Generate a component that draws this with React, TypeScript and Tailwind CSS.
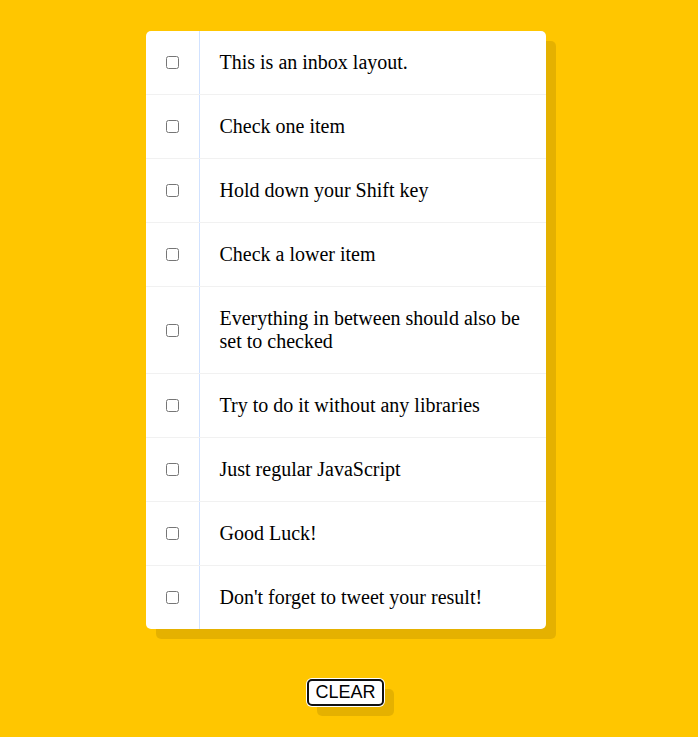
const items = [
  'This is an inbox layout.',
  'Check one item',
  'Hold down your Shift key',
  'Check a lower item',
  'Everything in between should also be set to checked',
  'Try to do it without any libraries',
  'Just regular JavaScript',
  'Good Luck!',
  "Don't forget to tweet your result!",
];

export default function App() {
  return (
    <main className="flex min-h-screen flex-col items-center bg-[#ffc600] pt-[31px] pr-[23px] pl-4 font-['Liberation_Serif',serif] text-black">
      <ul className="w-full max-w-[400px] rounded-[5px] bg-white shadow-[10px_10px_0_rgba(0,0,0,0.1)]">
        {items.map((text, i) => (
          <li key={text} className="flex items-center border-b border-[#f1f1f1] last:border-b-0">
            <input id={`item-${i}`} type="checkbox" className="m-5 size-[13px]" />
            <label htmlFor={`item-${i}`} className="flex-1 border-l border-[#d1e2ff] p-5 text-[20px] leading-[23px]">
              {text}
            </label>
          </li>
        ))}
      </ul>
      <button
        type="button"
        className="mt-[50px] w-[77px] rounded-[5px] border-2 border-[#101010] bg-white text-center font-['Liberation_Sans',sans-serif] text-[18px] leading-[23px] shadow-[0_0_0_1px_#ffffff,10px_10px_0_rgba(0,0,0,0.1)]"
      >
        CLEAR
      </button>
    </main>
  );
}
